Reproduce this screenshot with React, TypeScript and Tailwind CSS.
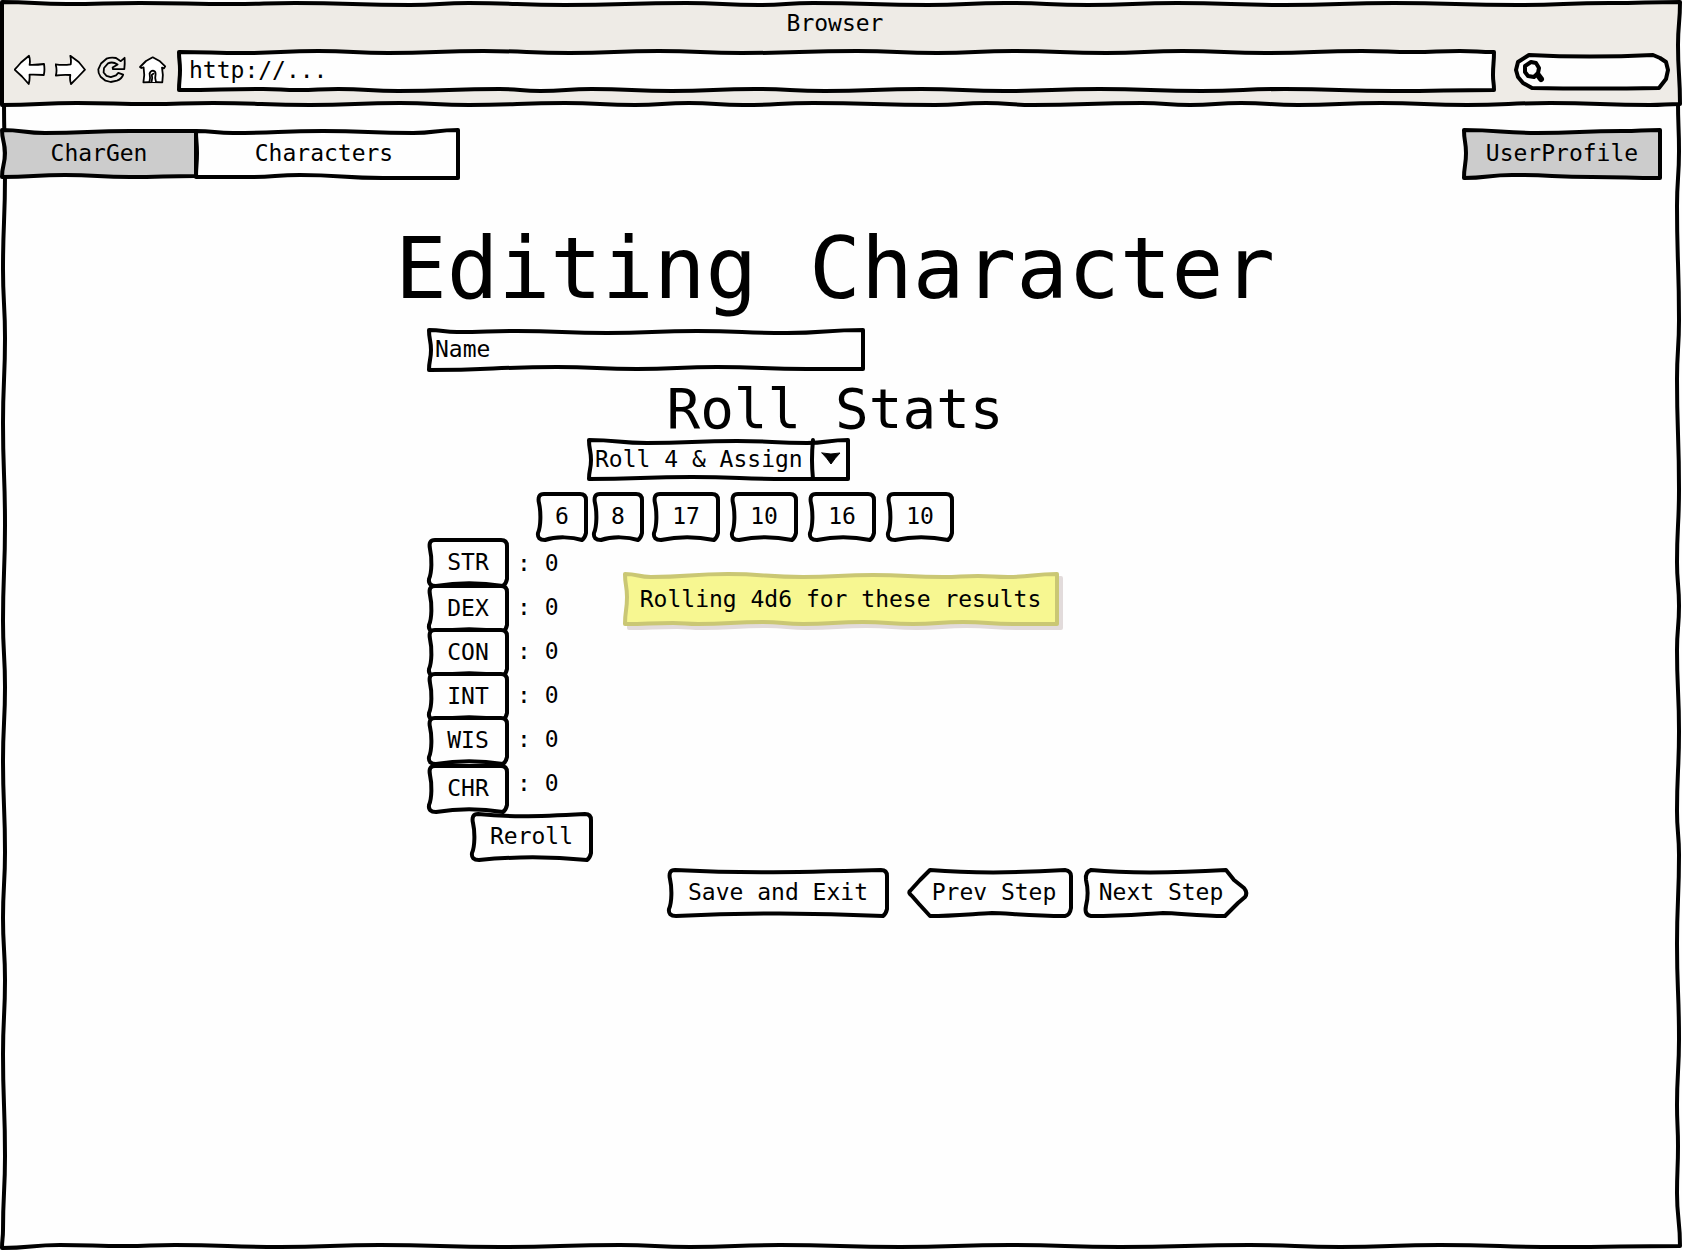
import React, { useState } from "react";

type Pt = [number, number];

// Pen strokes that run through the given points, flat at each crest.
const across = (pts: Pt[]) =>
  pts
    .slice(1)
    .map(([x, y], i) => {
      const m = (pts[i][0] + x) / 2;
      return `C${m},${pts[i][1]} ${m},${y} ${x},${y}`;
    })
    .join(" ");
const down = (pts: Pt[]) =>
  pts
    .slice(1)
    .map(([x, y], i) => {
      const m = (pts[i][1] + y) / 2;
      return `C${pts[i][0]},${m} ${x},${m} ${x},${y}`;
    })
    .join(" ");

// Closed box: top and bottom run left to right, left and right run top to bottom.
const box = (top: Pt[], right: Pt[], bottom: Pt[], left: Pt[]) => {
  const t = top;
  const r = [t[t.length - 1], ...right, bottom[bottom.length - 1]];
  const b = [...bottom].reverse();
  const l = [bottom[0], ...[...left].reverse(), t[0]];
  return `M${t[0][0]},${t[0][1]} ${across(t)} ${down(r)} ${across(b)} ${down(l)} Z`;
};

// Box with softened corners, used for push buttons.
const soft = (w: number, h: number, dip: number) =>
  `M8,2 C${w * 0.3},${2 + dip} ${w * 0.5},${2 + dip} ${w - 8},2 Q${w - 2},2 ${w - 2},8 L${w - 2},${h - 8} ` +
  `Q${w - 3},${h - 3} ${w - 6},${h - 1} C${w * 0.7},${h - 4} ${w * 0.4},${h - 5} 9,${h - 1} ` +
  `Q1,${h - 1} 2,${h - 8} C5,${h * 0.7} 5,${h * 0.4} 3,11 Q1,2 8,2 Z`;

function Ink({
  w,
  h,
  d,
  fill = "#fefefe",
  stroke = "#000",
  children,
}: {
  w: number;
  h: number;
  d: string;
  fill?: string;
  stroke?: string;
  children?: React.ReactNode;
}) {
  return (
    <svg
      aria-hidden="true"
      className="pointer-events-none absolute inset-0 -z-10 h-full w-full overflow-visible"
      viewBox={`0 0 ${w} ${h}`}
      preserveAspectRatio="none"
      fill={fill}
      stroke={stroke}
      strokeWidth={4}
      strokeLinejoin="round"
      strokeLinecap="round"
    >
      <path d={d} vectorEffect="non-scaling-stroke" />
      {children}
    </svg>
  );
}

const headerPath = box(
  [[2, 2], [67, 4], [140, 3], [233, 4], [295, 3], [410, 5], [469, 3], [565, 5], [686, 3], [759, 5], [813, 3], [928, 5], [1005, 3], [1088, 5], [1177, 3], [1285, 5], [1394, 3], [1517, 5], [1610, 3], [1680, 2]],
  [[1678, 45]],
  [[2, 105], [77, 103], [150, 104], [213, 103], [310, 105], [400, 103], [469, 105], [565, 103], [635, 105], [689, 103], [743, 105], [813, 103], [935, 105], [986, 103], [1033, 105], [1142, 103], [1190, 105], [1241, 103], [1298, 105], [1381, 103], [1467, 105], [1550, 103], [1650, 105], [1680, 104]],
  [[2, 50]],
);

const pagePath = box(
  [[4, -4], [1678, -4]],
  [[1679, 45], [1677, 100], [1679, 214], [1677, 273], [1679, 383], [1677, 456], [1679, 500], [1677, 544], [1679, 625], [1677, 705], [1679, 749], [1677, 838], [1679, 933], [1677, 999], [1678, 1040], [1677, 1087]],
  [[2, 1142], [60, 1139], [125, 1140], [175, 1139], [280, 1141], [380, 1139], [500, 1141], [620, 1139], [690, 1141], [780, 1139], [900, 1141], [1010, 1139], [1120, 1141], [1250, 1139], [1340, 1141], [1440, 1139], [1560, 1141], [1680, 1140]],
  [[5, 70], [3, 163], [5, 232], [3, 317], [5, 419], [3, 515], [5, 581], [3, 654], [5, 746], [3, 812], [5, 874], [3, 948], [5, 1050], [3, 1124]],
);

const urlPath = box(
  [[2, 2], [66, 3], [141, 1], [211, 3], [306, 1], [392, 3], [481, 1], [564, 3], [679, 1], [759, 3], [835, 1], [928, 3], [1004, 1], [1087, 3], [1183, 1], [1234, 2], [1281, 1], [1315, 2]],
  [[1314, 25]],
  [[2, 40], [86, 39], [121, 40], [161, 39], [221, 41], [322, 39], [363, 41], [414, 39], [494, 41], [577, 39], [647, 41], [743, 39], [826, 41], [921, 39], [1023, 41], [1106, 39], [1215, 41], [1315, 40]],
  [[3, 20]],
);

const activeTabPath = box([[2, 2], [45, 5], [130, 3], [196, 3]], [], [[2, 49], [65, 47], [130, 49], [196, 48]], [[5, 25]]);
const tabPath = box([[2, 3], [39, 5], [129, 3], [219, 5], [264, 2]], [], [[2, 49], [56, 49], [106, 47], [189, 50], [264, 50]], [[3, 25]]);
const profilePath = box([[2, 2], [75, 5], [160, 3], [198, 2]], [], [[2, 50], [50, 47], [130, 49], [198, 50]], [[4, 25]]);
const namePath = box(
  [[2, 2], [30, 4], [90, 3], [180, 5], [270, 3], [360, 5], [436, 2]],
  [],
  [[2, 42], [130, 39], [210, 41], [290, 39], [380, 41], [436, 41]],
  [[4, 22]],
);
const selectPath = box([[2, 2], [60, 5], [150, 3], [220, 5], [261, 2]], [], [[2, 41], [105, 39], [200, 41], [261, 41]], [[4, 22]]);
const notePath = box(
  [[2, 2], [28, 5], [105, 2], [180, 5], [250, 3], [320, 5], [355, 4], [385, 5], [434, 2]],
  [],
  [[2, 52], [50, 51], [75, 52], [140, 50], [180, 52], [240, 50], [290, 52], [340, 50], [390, 52], [434, 52]],
  [[4, 25]],
);
const prevPath =
  "M23,2 C60,5 110,5 158,2 Q164,3 164,8 L164,40 Q163,47 158,48 C120,48 100,45 85,45 C65,46 45,48 23,48 L12,36 L5,28 Q1,25 3,23 L13,12 Z";
const nextPath =
  "M8,2 C40,5 90,5 143,2 L151,12 L161,20 Q165,25 162,29 L155,35 L142,48 C115,48 95,45 80,45 C60,46 40,48 8,48 Q1,47 3,38 C5,30 5,20 3,12 Q2,4 8,2 Z";

function Push({
  children,
  w,
  d,
  className,
}: {
  children: React.ReactNode;
  w: number;
  d?: string;
  className: string;
}) {
  return (
    <button type="button" className={`relative isolate h-[49px] shrink-0 cursor-pointer pb-0.5 ${className}`}>
      <Ink w={w} h={49} d={d ?? soft(w, 49, w > 100 ? 3 : 0)} />
      {children}
    </button>
  );
}

function BarIcon({ label, children }: { label: string; children: React.ReactNode }) {
  return (
    <button type="button" aria-label={label} className="size-8 shrink-0 cursor-pointer">
      <svg
        viewBox="0 0 32 32"
        className="size-8"
        fill="#fefefe"
        stroke="#000"
        strokeWidth={1.8}
        strokeLinejoin="round"
        strokeLinecap="round"
      >
        {children}
      </svg>
    </button>
  );
}

// Ability buttons overlap the one above like stacked cards.
const stats = [
  { name: "STR", overlap: "" },
  { name: "DEX", overlap: "-mt-[3px]" },
  { name: "CON", overlap: "-mt-[5px]" },
  { name: "INT", overlap: "-mt-[5px]" },
  { name: "WIS", overlap: "-mt-[5px]" },
  { name: "CHR", overlap: "-mt-px" },
];

export default function App() {
  const [url, setUrl] = useState("http://...");
  const [name, setName] = useState("Name");
  return (
    <div className="flex min-h-screen flex-col bg-[#fefefe] font-['DejaVu_Sans_Mono',monospace] text-[23px] leading-7 text-black">
      <header className="relative isolate z-10 flex h-[106px] flex-col">
        <Ink w={1682} h={106} d={headerPath} fill="#eeebe6" />
        <p className="pt-[9px] pr-3 text-center">Browser</p>
        <div className="mt-[13px] flex items-center pr-3 pl-3.5">
          <div className="flex gap-[9px] pb-[3px]">
            <BarIcon label="Back">
              <path d="M.6 15.7 Q4 12 7 8.5 L15 1.8 Q16.5 6 15.6 10.8 Q23 11 30 10 Q31 16 29.8 21 Q22 20.5 15.5 20.7 Q16 25 14.7 30 L8 22.5 Z" />
            </BarIcon>
            <BarIcon label="Forward">
              <path d="M.6 10.3 Q8 11.5 15.7 10.3 Q16.4 6 15.3 1.8 L23.7 8 Q27 12 30 15.7 L22.5 23.5 L16 30 Q14.5 26 15.3 21 Q8 20.5 .8 21.5 Q2.4 16 .6 10.3 Z" />
            </BarIcon>
            <BarIcon label="Reload">
              <path
                fill="none"
                d="M28.6 3.8 Q29 9.5 28.3 15.2 L17 15.2 L16.6 13.6 L21.6 10.4 Q16.5 7.2 12 9.4 L8 14 L7.6 18.5 L10.5 21.8 L14.8 23.2 L20 21.4 L22.3 18.8 L27.2 20.6 Q25.8 24.8 21 26.6 L14.7 28 L9.5 26.7 L4.6 22.8 Q2 19.5 2.3 15.4 L5 9.5 L10.5 4.7 Q15 2.9 20 4 L24.8 7.2 Z"
              />
            </BarIcon>
            <BarIcon label="Home">
              <path d="M3 13 L9 7 L15.7 3.3 L23 7.3 L28.2 12.3 L27 14.4 L25 13.6 Q26.6 21 25.3 28.4 Q16 27.6 6.4 28.4 Q8 21 6.6 13.4 L4.4 14 Z" />
              <path d="M12.4 28 Q13.6 24 12.6 19.6 Q13.6 16.6 16 16.6 Q18.6 17 18.6 20 Q17.6 24 19 28 M14.6 27.6 Q15.8 24 14.8 21 L16.4 19.6" />
            </BarIcon>
          </div>
          <div className="relative isolate ml-2 h-[42px] flex-1">
            <Ink w={1318} h={42} d={urlPath} />
            <input
              aria-label="Address"
              className="h-full w-full bg-transparent px-3 pb-[3px] outline-none"
              value={url}
              onChange={(e) => setUrl(e.target.value)}
            />
          </div>
          <div className="relative isolate ml-[17px] h-[37px] w-[156px]">
            <Ink
              w={156}
              h={37}
              d="M2,17 L4,9 L15,2 Q75,5 139,2 L146,5 L152,9 L154,17 L152,26 L145,35 Q80,36 18,35 L9,30 L4,24 Z"
            >
              <path fill="none" d="M17,9 L22,10 L25,15 L24,20 L20,24 L14,23 L11,19 L11,13 Z" />
              <path fill="none" strokeWidth={6} d="M24,22 L27,26" />
            </Ink>
            <input
              type="search"
              aria-label="Search"
              className="h-full w-full bg-transparent pr-3 pl-9 outline-none"
            />
          </div>
        </div>
      </header>

      <div className="relative isolate flex-1 pt-[22px] pb-16">
        <Ink w={1682} h={1144} d={pagePath} />
        <nav className="flex items-start">
          <button type="button" className="relative isolate h-[52px] w-[198px] cursor-pointer pb-0.5">
            <Ink w={198} h={52} d={activeTabPath} fill="#cccccc" />
            CharGen
          </button>
          <button type="button" className="relative isolate -ml-1 h-[52px] w-[266px] cursor-pointer pr-1.5 pb-0.5">
            <Ink w={266} h={52} d={tabPath} />
            Characters
          </button>
          <button type="button" className="relative isolate mr-5 ml-auto h-[52px] w-[200px] cursor-pointer pb-0.5">
            <Ink w={200} h={52} d={profilePath} fill="#cccccc" />
            UserProfile
          </button>
        </nav>

        <main className="pr-3">
          <h1 className="mt-10 text-center text-[86px] leading-24 whitespace-nowrap">Editing Character</h1>
          <div className="mx-auto w-full max-w-[828px] pl-1.5">
            <div className="relative isolate mt-3 h-[43px] max-w-[438px]">
              <Ink w={438} h={43} d={namePath} />
              <input
                aria-label="Name"
                className="h-full w-full bg-transparent px-2 pb-0.5 outline-none"
                value={name}
                onChange={(e) => setName(e.target.value)}
              />
            </div>
            <h2 className="mt-2.5 pr-1.5 text-center text-[56px] leading-14">Roll Stats</h2>
            <div className="relative isolate mt-px ml-40 h-[43px] w-[263px]">
              <Ink w={263} h={43} d={selectPath}>
                <path d="M226,2 Q224,22 226,41" fill="none" />
                <path d="M235,15 Q244,17 253,15 Q248,20 244,26 Q240,20 235,15 Z" fill="#000" strokeWidth={1} />
              </Ink>
              <select
                aria-label="Rolling method"
                className="h-full w-full cursor-pointer appearance-none bg-transparent pr-9 pb-0.5 pl-2 outline-none"
              >
                <option>Roll 4 &amp; Assign</option>
              </select>
            </div>
            <div className="mt-[11px] ml-[109px] flex">
              <div className="mr-2 flex gap-1">
                <Push w={52} className="w-[52px]">6</Push>
                <Push w={52} className="w-[52px]">8</Push>
              </div>
              <div className="flex gap-2.5">
                {["17", "10", "16", "10"].map((n, i) => (
                  <Push key={i} w={68} className="w-[68px]">
                    {n}
                  </Push>
                ))}
              </div>
            </div>

            <div className="-mt-[3px] flex items-start">
              <div className="flex flex-col">
                {stats.map((s) => (
                  <Push key={s.name} w={82} className={`w-[82px] ${s.overlap}`}>
                    {s.name}
                  </Push>
                ))}
              </div>
              <ul className="mt-[3px] ml-2 leading-11">
                {stats.map((s) => (
                  <li key={s.name} className="whitespace-pre">
                    : 0
                  </li>
                ))}
              </ul>
              <div
                role="note"
                className="relative isolate mt-[34px] ml-16 flex h-[54px] w-[436px] items-center justify-center"
              >
                <Ink w={436} h={54} d={notePath} fill="#f7f791" stroke="#cac774" />
                <div className="absolute inset-0 -z-20 translate-x-1 translate-y-1">
                  <Ink w={436} h={54} d={notePath} fill="#e2dbdb" stroke="#e2dbdb" />
                </div>
                Rolling 4d6 for these results
              </div>
            </div>
            <Push w={123} className="-mt-px ml-[43px] w-[123px]">
              Reroll
            </Push>
            <div className="mt-[7px] flex justify-end">
              <Push w={222} className="w-[222px]">Save and Exit</Push>
              <Push w={166} d={prevPath} className="ml-4.5 w-[166px] pl-2">Prev Step</Push>
              <Push w={166} d={nextPath} className="ml-2.5 w-[166px] pr-2.5">Next Step</Push>
            </div>
          </div>
        </main>
      </div>
    </div>
  );
}
